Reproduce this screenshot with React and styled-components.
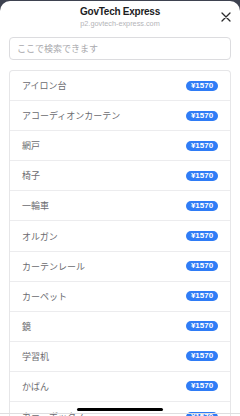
import React from "react";
import styled, { createGlobalStyle } from "styled-components";

const Global = createGlobalStyle`
  html, body {
    margin: 0;
    padding: 0;
    height: 416px;
    overflow: hidden;
    background: #3e4250;
  }
  body {
    font-family: "Liberation Sans", "Noto Sans CJK JP", sans-serif;
  }
`;

const Sheet = styled.div`
  position: relative;
  margin-top: 1px;
  height: 415px;
  background: #ffffff;
  border-radius: 10px 10px 0 0;
  overflow: hidden;
  display: flex;
  flex-direction: column;
  & > * {
    flex-shrink: 0;
  }
`;

const Header = styled.header`
  display: grid;
  grid-template-columns: 24px 1fr 24px;
  align-items: center;
  padding: 5px 2px 0 2px;
  height: 30px;
  box-sizing: border-box;
`;

const TitleBlock = styled.div`
  grid-column: 2;
  display: flex;
  flex-direction: column;
  align-items: center;
  align-self: start;
`;

const Title = styled.div`
  font-size: 10px;
  font-weight: 700;
  letter-spacing: -0.25px;
  color: #1c1c1e;
  line-height: 12px;
`;

const Subtitle = styled.div`
  font-size: 7.3px;
  color: #b4b4b8;
  line-height: 9px;
  margin-top: 1px;
`;

const CloseButton = styled.button`
  grid-column: 3;
  align-self: start;
  margin-top: 4px;
  width: 24px;
  height: 14px;
  padding: 0;
  border: 0;
  background: transparent;
  display: flex;
  align-items: center;
  justify-content: center;
`;

const SearchBox = styled.input`
  margin: 6px 9px 0;
  height: 23px;
  box-sizing: border-box;
  border: 1px solid #dcdcdf;
  border-radius: 4px;
  padding: 0 7px;
  font-family: "Liberation Sans", "Noto Sans CJK JP", sans-serif;
  font-size: 9px;
  color: #333;
  outline: none;
  &::placeholder {
    color: #a9a9ad;
  }
`;

const List = styled.ul`
  list-style: none;
  margin: 10px 9px 0;
  padding: 0;
  border: 1px solid #e6e6e8;
  border-bottom: 0;
  border-radius: 4px 4px 0 0;
`;

const Row = styled.li`
  display: flex;
  align-items: center;
  justify-content: space-between;
  height: 30.1px;
  box-sizing: border-box;
  padding: 0 12px 0 12px;
  border-bottom: 1px solid #ececee;
`;

const Name = styled.span`
  font-size: 9px;
  color: #6b6b6f;
  font-family: "Noto Sans CJK JP", sans-serif;
`;

const Badge = styled.span`
  display: inline-flex;
  align-items: center;
  justify-content: center;
  width: 32px;
  height: 10px;
  border-radius: 5px;
  background: #2f7cf6;
  color: #ffffff;
  font-size: 8px;
  font-weight: 700;
  line-height: 10px;
`;

const HomeIndicator = styled.div`
  position: absolute;
  left: 77px;
  top: 407px;
  width: 86px;
  height: 3px;
  border-radius: 2px;
  background: #000000;
`;

const BottomEdge = styled.div`
  position: absolute;
  left: 0;
  right: 0;
  top: 412px;
  height: 1px;
  background: #dedee0;
`;

const items = [
  "アイロン台",
  "アコーディオンカーテン",
  "網戸",
  "椅子",
  "一輪車",
  "オルガン",
  "カーテンレール",
  "カーペット",
  "鏡",
  "学習机",
  "かばん",
  "カラーボックス",
];

export default function App() {
  return (
    <>
      <Global />
      <Sheet>
        <Header>
          <TitleBlock>
            <Title>GovTech Express</Title>
            <Subtitle>p2.govtech-express.com</Subtitle>
          </TitleBlock>
          <CloseButton aria-label="close">
            <svg width="10" height="10" viewBox="0 0 10 10">
              <path d="M1 1 L9 9 M9 1 L1 9" stroke="#2a2a2c" strokeWidth="1.3" strokeLinecap="round" />
            </svg>
          </CloseButton>
        </Header>
        <SearchBox placeholder="ここで検索できます" />
        <List>
          {items.map((name) => (
            <Row key={name}>
              <Name>{name}</Name>
              <Badge>¥1570</Badge>
            </Row>
          ))}
        </List>
        <BottomEdge />
        <HomeIndicator />
      </Sheet>
    </>
  );
}
